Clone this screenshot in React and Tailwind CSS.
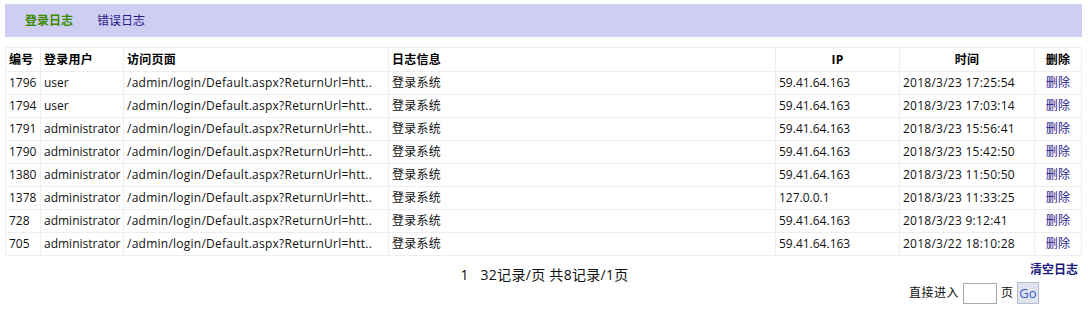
import React from "react";

const rows = [
  ["1796", "user", "59.41.64.163", "2018/3/23 17:25:54"],
  ["1794", "user", "59.41.64.163", "2018/3/23 17:03:14"],
  ["1791", "administrator", "59.41.64.163", "2018/3/23 15:56:41"],
  ["1790", "administrator", "59.41.64.163", "2018/3/23 15:42:50"],
  ["1380", "administrator", "59.41.64.163", "2018/3/23 11:50:50"],
  ["1378", "administrator", "127.0.0.1", "2018/3/23 11:33:25"],
  ["728", "administrator", "59.41.64.163", "2018/3/23 9:12:41"],
  ["705", "administrator", "59.41.64.163", "2018/3/22 18:10:28"],
];

const font = { fontFamily: '"Open Sans", "Noto Sans CJK SC", sans-serif' };

export default function App() {
  return (
    <div
      className="w-[1088px] h-[310px] bg-white text-[12px] text-[#111] px-[5px] pt-[4px]"
      style={font}
    >
      <div className="h-[33px] w-[1077px] bg-[#cecef2] flex items-center pl-[20px] gap-[24px]">
        <span className="font-bold text-[#3a8a00]">登录日志</span>
        <span className="text-[#2a1a8a]">错误日志</span>
      </div>
      <table className="mt-[10px] w-[1076px] border-collapse table-fixed">
        <colgroup>
          <col className="w-[35px]" />
          <col className="w-[83px]" />
          <col className="w-[265px]" />
          <col className="w-[387px]" />
          <col className="w-[124px]" />
          <col className="w-[135px]" />
          <col className="w-[47px]" />
        </colgroup>
        <thead>
          <tr className="h-[24px] font-bold text-black tracking-[0.25px]">
            <th className="border border-[#eeeeee] text-left px-[3px]">编号</th>
            <th className="border border-[#eeeeee] text-left px-[3px]">登录用户</th>
            <th className="border border-[#eeeeee] text-left px-[3px]">访问页面</th>
            <th className="border border-[#eeeeee] text-left px-[3px]">日志信息</th>
            <th className="border border-[#eeeeee] text-center px-[3px]">IP</th>
            <th className="border border-[#eeeeee] text-center px-[3px]">时间</th>
            <th className="border border-[#eeeeee] text-center px-[3px]">删除</th>
          </tr>
        </thead>
        <tbody>
          {rows.map((r) => (
            <tr key={r[0]} className="h-[23px]">
              <td className="border border-[#eeeeee] px-[3px] whitespace-nowrap">{r[0]}</td>
              <td className="border border-[#eeeeee] px-[3px] whitespace-nowrap overflow-hidden">{r[1]}</td>
              <td className="border border-[#eeeeee] px-[3px] whitespace-nowrap overflow-hidden tracking-[0.25px]">
                /admin/login/Default.aspx?ReturnUrl=htt..
              </td>
              <td className="border border-[#eeeeee] px-[3px] whitespace-nowrap tracking-[0.25px]">登录系统</td>
              <td className="border border-[#eeeeee] px-[3px] whitespace-nowrap">{r[2]}</td>
              <td className="border border-[#eeeeee] px-[3px] whitespace-nowrap tracking-[0.25px]">{r[3]}</td>
              <td className="border border-[#eeeeee] px-[3px] text-center text-[#2a1a8a] tracking-[0.25px]">删除</td>
            </tr>
          ))}
        </tbody>
      </table>
      <div className="grid grid-cols-[1fr_auto_1fr] w-[1077px]">
        <div />
        <div className="pt-[8px] pl-[2px]">
          <span className="text-[14px] tracking-[0.3px]">1&nbsp;&nbsp;&nbsp;32记录/页 共8记录/1页</span>
        </div>
        <div className="flex flex-col items-end pr-[4px]">
          <span className="font-bold text-[#1a1a80] mt-[5px]">清空日志</span>
          <div className="flex items-center gap-[4px] pr-[39px] mt-[3px]">
            <span className="tracking-[0.5px]">直接进入</span>
            <input className="w-[34px] h-[21px] border border-[#aaaaaa] bg-white" />
            <span>页</span>
            <button className="h-[22px] w-[22px] bg-[#dde4ee] border border-[#b6bdcc] text-[#3a5ad0] text-[13px] leading-none flex items-center justify-center">
              Go
            </button>
          </div>
        </div>
      </div>
    </div>
  );
}
